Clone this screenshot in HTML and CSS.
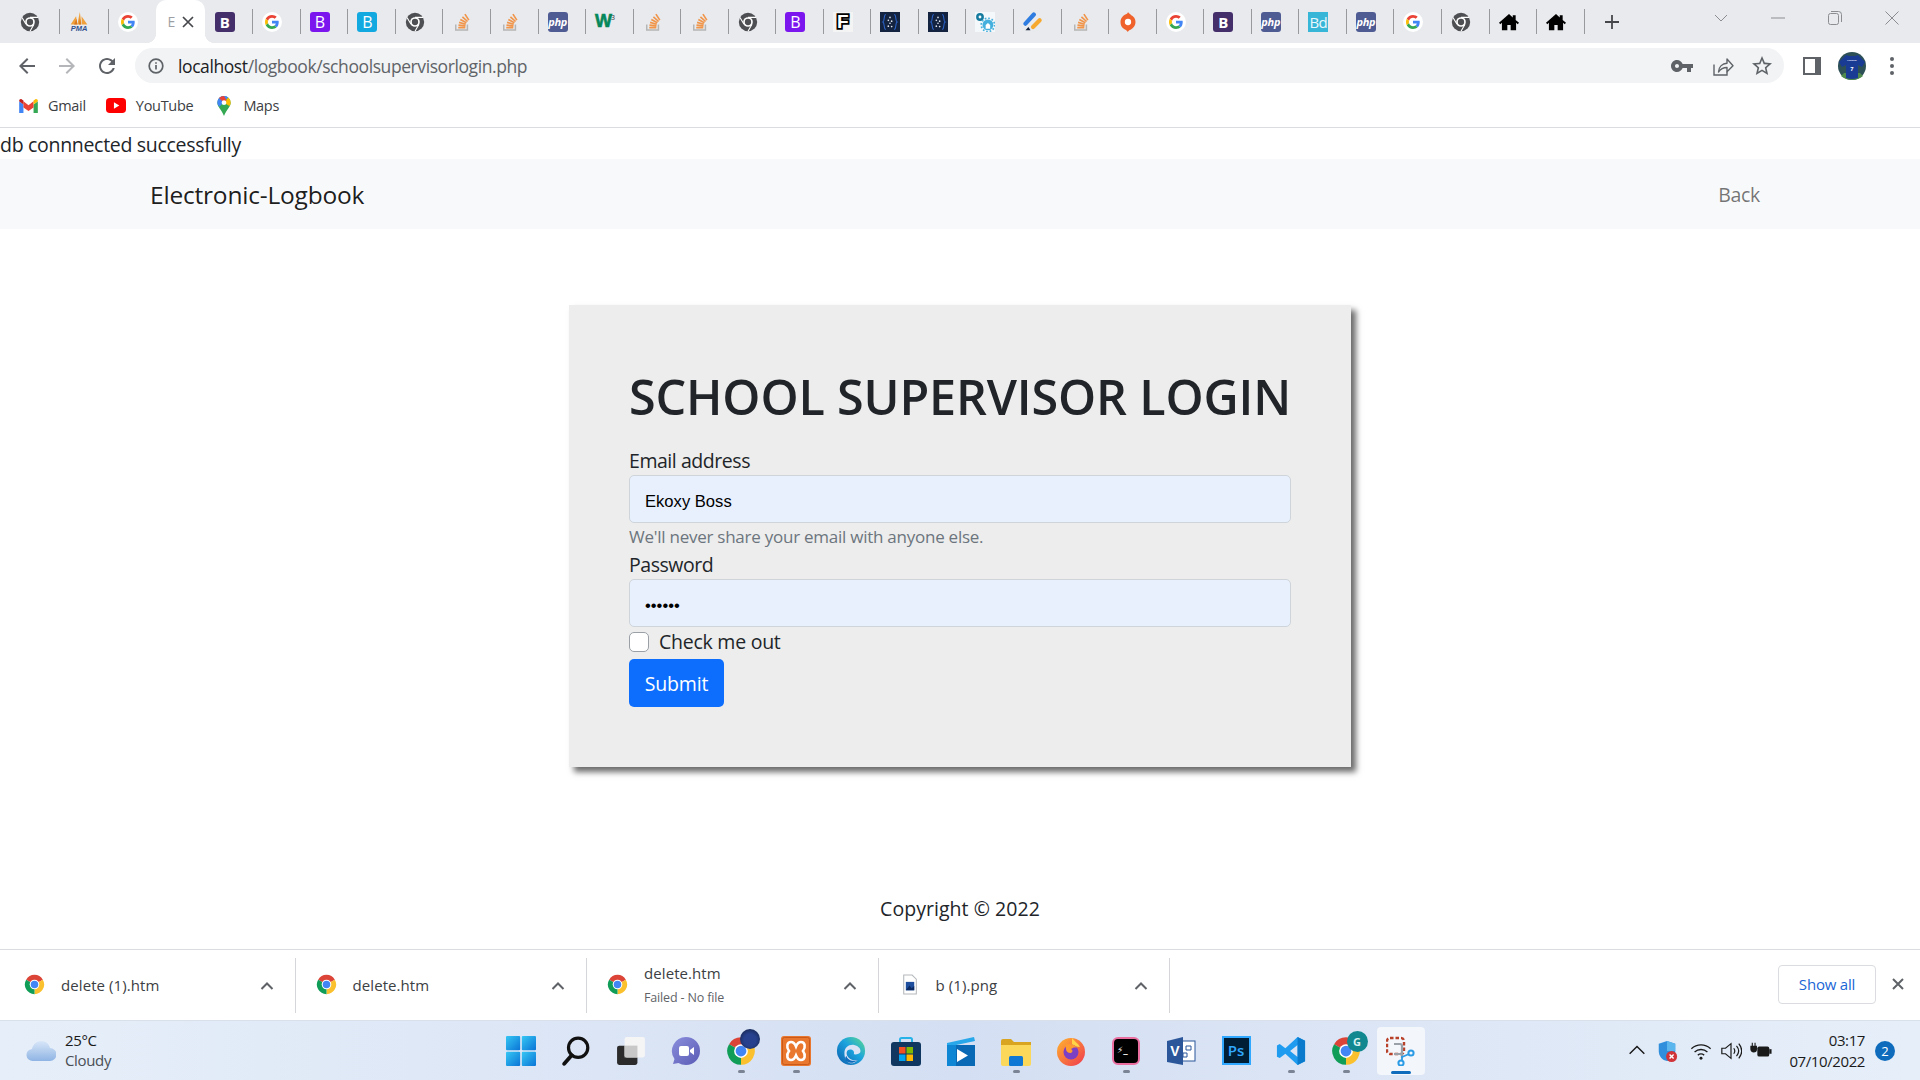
FILE: index.html
```html
<!DOCTYPE html>
<html lang="en">
<head>
<meta charset="utf-8">
<title>School Supervisor Login</title>
<link rel="stylesheet" href="styles.css">
</head>
<body>
<svg class="defs" width="0" height="0" aria-hidden="true">
  <defs>
    <linearGradient id="g-win" x1="0" y1="0" x2="1" y2="1"><stop offset="0" stop-color="#35c7f4"/><stop offset="1" stop-color="#0a74d6"/></linearGradient>
    <linearGradient id="g-chat" x1="0" y1="0" x2="1" y2="1"><stop offset="0" stop-color="#8b8fdc"/><stop offset="1" stop-color="#5a5bb5"/></linearGradient>
    <linearGradient id="g-edge" x1="0" y1="1" x2="1" y2="0"><stop offset="0" stop-color="#0b5cab"/><stop offset=".55" stop-color="#1ba3de"/><stop offset="1" stop-color="#5fdc8c"/></linearGradient>
    <linearGradient id="g-cloud" x1="0" y1="0" x2="0" y2="1"><stop offset="0" stop-color="#d8e6f8"/><stop offset="1" stop-color="#8fb4e4"/></linearGradient>
    <linearGradient id="g-fox" x1="0" y1="0" x2="1" y2="1"><stop offset="0" stop-color="#ffb52e"/><stop offset="1" stop-color="#f0374f"/></linearGradient>
    <symbol id="i-chrome-grey" viewBox="0 0 24 24">
      <circle cx="12" cy="12" r="11" fill="#4e4f52"/>
      <circle cx="12" cy="12" r="5.8" fill="#fff"/>
      <circle cx="12" cy="12" r="3.8" fill="#4e4f52"/>
      <path d="M12 6.400h9.600M7.200 14.800 2.400 6.500M16.800 14.800 12 23" stroke="#fff" stroke-width="1.300" fill="none"/>
    </symbol>
    <symbol id="i-chrome" viewBox="0 0 24 24">
      <path d="M12 12 2.470 6.500A11 11 0 0 1 21.530 6.500Z" fill="#db4437"/>
      <path d="M12 12 21.530 6.500A11 11 0 0 1 12 23Z" fill="#fbc02d"/>
      <path d="M12 12 12 23A11 11 0 0 1 2.470 6.500Z" fill="#0f9d58"/>
      <circle cx="12" cy="12" r="5.500" fill="#fff"/>
      <circle cx="12" cy="12" r="4.300" fill="#4285f4"/>
    </symbol>
    <symbol id="i-google" viewBox="0 0 60 60">
      <circle cx="30" cy="30" r="30" fill="#fff"/>
      <g transform="translate(9 9) scale(.875)">
        <path fill="#EA4335" d="M24 9.500c3.540 0 6.710 1.220 9.210 3.600l6.850-6.850C35.900 2.380 30.470 0 24 0 14.620 0 6.510 5.380 2.560 13.220l7.980 6.190C12.430 13.720 17.740 9.500 24 9.500z"/>
        <path fill="#4285F4" d="M46.980 24.550c0-1.570-.15-3.090-.38-4.550H24v9.020h12.940c-.58 2.960-2.260 5.480-4.780 7.180l7.730 6c4.510-4.180 7.090-10.360 7.090-17.650z"/>
        <path fill="#FBBC05" d="M10.530 28.590c-.48-1.450-.76-2.990-.76-4.590s.27-3.140.76-4.590l-7.980-6.190C.92 16.460 0 20.120 0 24c0 3.880.92 7.540 2.560 10.780l7.970-6.190z"/>
        <path fill="#34A853" d="M24 48c6.480 0 11.930-2.130 15.890-5.810l-7.730-6c-2.150 1.450-4.920 2.300-8.160 2.300-6.260 0-11.570-4.220-13.470-9.910l-7.980 6.190C6.510 42.620 14.620 48 24 48z"/>
      </g>
    </symbol>
    <symbol id="i-pma" viewBox="0 0 24 24">
      <path d="M2 15 8.500 5l1.500 10zM10 15l3-15 2 15zM15.500 15 15 5l7 10z" fill="#f0a13c"/>
      <path d="M6 15 9 8l1 7zM12 15l1-8 1.500 8z" fill="#d9781f"/>
      <text x="12" y="23" class="pma-text">PMA</text>
    </symbol>
    <symbol id="i-so" viewBox="0 0 24 24">
      <path d="M4.500 15v6.500h14V15" fill="none" stroke="#b5b5b5" stroke-width="1.800"/>
      <path d="M7.500 18.800h8.500M7.800 15.800l8.400.8M8.500 12.500l8 2.200M10 9l7.300 4M12.500 5.800l6.200 5.600M15.500 2.500l4.700 7.300" fill="none" stroke="#f0954a" stroke-width="2"/>
    </symbol>
    <symbol id="i-dark" viewBox="0 0 24 24">
      <rect width="24" height="24" fill="#14233f"/>
      <path d="M7 3C4 3 6 11 3.500 12 6 13 4 21 7 21M17 3c3 0 1 8 3.500 9-2.500 1-.5 9-3.500 9" fill="none" stroke="#2b63c9" stroke-width="1.300"/>
      <circle cx="12" cy="6.500" r="1" fill="#dfe6f0"/><circle cx="10" cy="10" r="1" fill="#dfe6f0"/><circle cx="14" cy="11" r="1" fill="#dfe6f0"/><circle cx="12" cy="13.500" r="1" fill="#dfe6f0"/><circle cx="10" cy="17" r="1" fill="#dfe6f0"/><circle cx="14" cy="17.500" r="1" fill="#dfe6f0"/>
    </symbol>
    <symbol id="i-gear" viewBox="0 0 24 24">
      <rect width="24" height="24" fill="#f4f8fa"/>
      <circle cx="6" cy="6" r="3.200" fill="none" stroke="#147a9e" stroke-width="3"/>
      <circle cx="15.500" cy="15.500" r="6.500" fill="#45b0dd"/>
      <circle cx="15.500" cy="15.500" r="8" fill="none" stroke="#45b0dd" stroke-width="2" stroke-dasharray="2 2.200"/>
      <path d="M12.800 20v-4.500l2.700-2.200 2.700 2.200V20z" fill="#fff"/>
    </symbol>
    <symbol id="i-tasks" viewBox="0 0 24 24">
      <path d="M3 14 13 3" stroke="#2f7de1" stroke-width="5" stroke-linecap="round" fill="none"/>
      <path d="M12 18l8-8" stroke="#f6a92e" stroke-width="5" stroke-linecap="round" fill="none"/>
      <path d="M3 22l3.500-4L9 22z" fill="#14233f"/>
    </symbol>
    <symbol id="i-origin" viewBox="0 0 24 24">
      <path d="M12 0c1 2 3 2.500 3.500 3.500C19 5 21 8 21 12c0 5-4 9-7 9.500-1 .5-2 2-2.500 2.500 0-1-1-2-2-2.500C5 20 3 16 3 12c0-5 4-8.500 7-9.500C11 2 12 1 12 0z" fill="#f0622c"/>
      <circle cx="12" cy="12" r="3.800" fill="#fff"/>
    </symbol>
    <symbol id="i-home" viewBox="0 0 24 24">
      <path d="M12 2.500 0 13l1.500 1.700L3.500 13v9h6.500v-6.500h4V22h6.500v-9l2 1.700L24 13l-4-3.500V4h-3.500v2.500z" fill="#000"/>
    </symbol>
    <symbol id="i-chev" viewBox="0 0 14 10"><path d="M1.500 8 7 2.500 12.500 8" fill="none" stroke="#5f6368" stroke-width="2"/></symbol>
  </defs>
</svg>

<div class="window">
  <header class="tabstrip">
    <div class="tab tab-wide tab-plain"><svg class="fav"><use href="#i-chrome-grey"/></svg></div>
    <div class="tab tab-wide"><svg class="fav"><use href="#i-pma"/></svg></div>
    <div class="tab"><svg class="fav"><use href="#i-google"/></svg></div>
    <div class="tab-active"><span class="tab-title">E</span><svg class="tab-x" viewBox="0 0 12 12"><path d="M1 1l10 10M11 1 1 11" stroke="#45474a" stroke-width="1.700"/></svg></div>
    <div class="tab tab-plain"><span class="fav fav-letter bs-dark">B</span></div>
    <div class="tab"><svg class="fav"><use href="#i-google"/></svg></div>
    <div class="tab"><span class="fav fav-letter bs-purple thin">B</span></div>
    <div class="tab"><span class="fav fav-letter bs-cyan thin">B</span></div>
    <div class="tab"><svg class="fav"><use href="#i-chrome-grey"/></svg></div>
    <div class="tab"><svg class="fav"><use href="#i-so"/></svg></div>
    <div class="tab"><svg class="fav"><use href="#i-so"/></svg></div>
    <div class="tab"><span class="fav fav-php">php</span></div>
    <div class="tab"><span class="fav fav-w3">W<sup>3</sup></span></div>
    <div class="tab"><svg class="fav"><use href="#i-so"/></svg></div>
    <div class="tab"><svg class="fav"><use href="#i-so"/></svg></div>
    <div class="tab"><svg class="fav"><use href="#i-chrome-grey"/></svg></div>
    <div class="tab"><span class="fav fav-letter bs-purple thin">B</span></div>
    <div class="tab"><span class="fav fav-f">F</span></div>
    <div class="tab"><svg class="fav"><use href="#i-dark"/></svg></div>
    <div class="tab"><svg class="fav"><use href="#i-dark"/></svg></div>
    <div class="tab"><svg class="fav"><use href="#i-gear"/></svg></div>
    <div class="tab"><svg class="fav"><use href="#i-tasks"/></svg></div>
    <div class="tab"><svg class="fav"><use href="#i-so"/></svg></div>
    <div class="tab"><svg class="fav"><use href="#i-origin"/></svg></div>
    <div class="tab"><svg class="fav"><use href="#i-google"/></svg></div>
    <div class="tab"><span class="fav fav-letter bs-dark">B</span></div>
    <div class="tab"><span class="fav fav-php">php</span></div>
    <div class="tab"><span class="fav fav-letter bd-cyan thin">Bd</span></div>
    <div class="tab"><span class="fav fav-php">php</span></div>
    <div class="tab"><svg class="fav"><use href="#i-google"/></svg></div>
    <div class="tab"><svg class="fav"><use href="#i-chrome-grey"/></svg></div>
    <div class="tab"><svg class="fav"><use href="#i-home"/></svg></div>
    <div class="tab"><svg class="fav"><use href="#i-home"/></svg></div>
    <div class="tab tab-new"><svg viewBox="0 0 16 16" class="plus"><path d="M8 1v14M1 8h14" stroke="#45474a" stroke-width="1.800"/></svg></div>
    <div class="winctl">
      <div class="winbtn"><svg viewBox="0 0 14 8" class="wc-chev"><path d="M1 1l6 6 6-6" fill="none" stroke="#8b8d91" stroke-width="1"/></svg></div>
      <div class="winbtn"><svg viewBox="0 0 14 14" class="wc"><path d="M0 7h14" stroke="#8b8d91" stroke-width="1"/></svg></div>
      <div class="winbtn"><svg viewBox="0 0 14 14" class="wc"><rect x=".5" y="2.500" width="10" height="11" rx="2" fill="none" stroke="#8b8d91"/><path d="M3 .5h7.500a3 3 0 0 1 3 3V11" fill="none" stroke="#8b8d91"/></svg></div>
      <div class="winbtn"><svg viewBox="0 0 14 14" class="wc"><path d="M.5.5l13 13M13.500.5l-13 13" stroke="#8b8d91" stroke-width="1"/></svg></div>
    </div>
  </header>

  <nav class="toolbar">
    <button class="tool"><svg viewBox="0 0 24 24"><path fill="#5f6368" d="M20 11H7.830l5.590-5.590L12 4l-8 8 8 8 1.410-1.410L7.830 13H20v-2z"/></svg></button>
    <button class="tool"><svg viewBox="0 0 24 24"><path fill="#b4b6b9" d="M4 11h12.170l-5.590-5.590L12 4l8 8-8 8-1.410-1.410L16.170 13H4v-2z"/></svg></button>
    <button class="tool"><svg viewBox="0 0 24 24"><path fill="#5f6368" d="M17.650 6.350C16.200 4.900 14.210 4 12 4c-4.420 0-7.990 3.580-7.990 8s3.570 8 7.990 8c3.730 0 6.840-2.550 7.730-6h-2.080c-.82 2.330-3.040 4-5.650 4-3.310 0-6-2.690-6-6s2.690-6 6-6c1.660 0 3.140.69 4.220 1.780L13 11h7V4l-2.350 2.350z"/></svg></button>
    <div class="omnibox">
      <svg class="info" viewBox="0 0 16 16"><circle cx="8" cy="8" r="6.800" fill="none" stroke="#5f6368" stroke-width="1.700"/><path d="M8 7v4.500M8 4.200v1.600" stroke="#5f6368" stroke-width="1.700"/></svg>
      <span class="url"><span class="url-host">localhost</span>/logbook/schoolsupervisorlogin.php</span>
      <div class="omni-actions">
        <button class="tool"><svg viewBox="0 0 24 24"><path fill="#5f6368" d="M12.650 10C11.830 7.670 9.610 6 7 6c-3.310 0-6 2.690-6 6s2.690 6 6 6c2.610 0 4.830-1.670 5.650-4H17v4h4v-4h2v-4H12.650zM7 14c-1.100 0-2-.9-2-2s.9-2 2-2 2 .9 2 2-.9 2-2 2z"/></svg></button>
        <button class="tool"><svg viewBox="0 0 24 24"><path d="M4 10.500V21h13v-3.500" fill="none" stroke="#5f6368" stroke-width="1.400"/><path d="M8.500 18c.3-5.500 4-8.500 8.500-8.700V5l6 6.700-6 6v-4.200c-3.500 0-6.500 1.500-8.500 4.500z" fill="none" stroke="#5f6368" stroke-width="1.400" stroke-linejoin="round"/></svg></button>
        <button class="tool"><svg viewBox="0 0 24 24"><path fill="#5f6368" d="M22 9.240l-7.190-.62L12 2 9.190 8.630 2 9.240l5.460 4.730L5.820 21 12 17.270 18.180 21l-1.630-7.030L22 9.240zM12 15.400l-3.760 2.270 1-4.280-3.320-2.880 4.380-.38L12 6.100l1.710 4.040 4.380.38-3.320 2.880 1 4.280L12 15.400z"/></svg></button>
      </div>
    </div>
    <button class="tool"><svg viewBox="0 0 24 24"><rect x="3" y="3" width="18" height="18" fill="#5f6368"/><rect x="5" y="5" width="10" height="14" fill="#fff"/></svg></button>
    <button class="tool"><svg class="avatar" viewBox="0 0 28 28"><circle cx="14" cy="14" r="14" fill="#2c5056"/><path d="M3 24c3 2.500 7 4 11 4s8-1.500 11-4l-3-3H6z" fill="#4f8a4c"/><path d="M8 3c2 1 4 1 6 1s4 0 6-1l7 7-3 5-4-2v13c-4 1.300-8 1.300-12 0V13l-4 2-3-5z" fill="#1a3b94"/><text x="14" y="9" class="avatar-name">PRINCE</text><text x="14" y="19" class="avatar-num">7</text></svg></button>
    <button class="tool"><svg viewBox="0 0 24 24"><circle cx="12" cy="5" r="2" fill="#5f6368"/><circle cx="12" cy="12" r="2" fill="#5f6368"/><circle cx="12" cy="19" r="2" fill="#5f6368"/></svg></button>
  </nav>

  <div class="bookmarks">
    <a class="bm bm-gmail"><svg class="bm-ic" viewBox="0 0 24 18"><path fill="#4285f4" d="M0 18h5.500V7L0 3z"/><path fill="#34a853" d="M18.500 18H24V3l-5.500 4z"/><path fill="#ea4335" d="M5.500 11V3L12 8l6.500-5v8L12 15.500z"/><path fill="#fbbc04" d="M18.500 7V2l2-1.400C22-.6 24 .5 24 2.500V3z"/><path fill="#c5221f" d="M0 3v-.5C0 .5 2-.6 3.500.6L5.500 2v5z"/></svg>Gmail</a>
    <a class="bm bm-yt"><svg class="bm-ic" viewBox="0 0 24 18"><rect width="24" height="18" rx="4.500" fill="#f00"/><path d="M9.500 5.200v7.600L16 9z" fill="#fff"/></svg>YouTube</a>
    <a class="bm bm-maps"><svg class="bm-pin" viewBox="0 0 16 24"><path d="M8 0a8 8 0 0 1 8 8c0 5-5 8-8 16C5 16 0 13 0 8a8 8 0 0 1 8-8z" fill="#34a853"/><path d="M2 2.500A8 8 0 0 1 13 1.700L2.500 13C1 11 0 10 0 8c0-2 .7-4 2-5.500z" fill="#4285f4"/><path d="M13 1.700A8 8 0 0 1 16 8c0 1.500-.6 2.800-1.500 4L8 8z" fill="#fbbc04"/><path d="M2 2.500 8 8l3-3-3-5C5.800 0 3.500 1 2 2.500z" fill="#ea4335"/><circle cx="8" cy="8" r="2.800" fill="#fff"/></svg>Maps</a>
  </div>

  <div class="page">
    <div class="db-msg">db connnected successfully</div>
    <div class="navbar">
      <a class="brand">Electronic-Logbook</a>
      <a class="nav-back">Back</a>
    </div>
    <main class="card">
      <h1 class="card-title">SCHOOL SUPERVISOR LOGIN</h1>
      <form>
        <label class="form-label" for="email">Email address</label>
        <input class="form-control" id="email" type="text" value="Ekoxy Boss">
        <div class="form-text">We'll never share your email with anyone else.</div>
        <label class="form-label" for="pw">Password</label>
        <input class="form-control" id="pw" type="password" value="secret">
        <div class="check-row"><span class="check-box"></span><span class="check-label">Check me out</span></div>
        <button class="btn-submit" type="button">Submit</button>
      </form>
    </main>
    <footer class="copyright">Copyright © 2022</footer>
  </div>

  <div class="downloads">
    <div class="dl"><svg class="dl-ic"><use href="#i-chrome"/></svg><div class="dl-name">delete (1).htm</div><svg class="dl-chev"><use href="#i-chev"/></svg></div>
    <div class="dl"><svg class="dl-ic"><use href="#i-chrome"/></svg><div class="dl-name">delete.htm</div><svg class="dl-chev"><use href="#i-chev"/></svg></div>
    <div class="dl"><svg class="dl-ic"><use href="#i-chrome"/></svg><div class="dl-name dl-two">delete.htm<small class="dl-sub">Failed - No file</small></div><svg class="dl-chev"><use href="#i-chev"/></svg></div>
    <div class="dl"><svg class="dl-ic" viewBox="0 0 20 20"><path d="M4.500 1h8l4 4v14h-12z" fill="#fff" stroke="#b5b8bc"/><rect x="6.500" y="7.500" width="8" height="8" fill="#1d4e9e"/><path d="M6.500 15.500 10 11l2 2.500 2.500-2v4z" fill="#0b2a63"/></svg><div class="dl-name">b (1).png</div><svg class="dl-chev"><use href="#i-chev"/></svg></div>
    <button class="show-all">Show all</button>
    <svg class="dl-close" viewBox="0 0 12 12"><path d="M1 1l10 10M11 1 1 11" stroke="#5f6368" stroke-width="2"/></svg>
  </div>

  <div class="taskbar">
    <div class="weather">
      <svg class="cloud" viewBox="0 0 30 22"><path d="M7 21a6 6 0 0 1-1-12C7 4 11 1 15.500 1 20 1 23 4 24 8a6.500 6.500 0 0 1 0 13z" fill="url(#g-cloud)"/></svg>
      <div class="weather-text"><div>25°C</div><div class="weather-sub">Cloudy</div></div>
    </div>
    <div class="apps">
      <div class="app"><svg class="app-ic" viewBox="0 0 29 29"><rect width="13.700" height="13.700" rx="1" fill="url(#g-win)"/><rect x="15.300" width="13.700" height="13.700" rx="1" fill="url(#g-win)"/><rect y="15.300" width="13.700" height="13.700" rx="1" fill="url(#g-win)"/><rect x="15.300" y="15.300" width="13.700" height="13.700" rx="1" fill="url(#g-win)"/></svg></div>
      <div class="app"><svg class="app-ic" viewBox="0 0 28 28"><circle cx="16" cy="11" r="9" fill="none" stroke="#111" stroke-width="3"/><path d="M10 18 3 26" stroke="#111" stroke-width="3.500" stroke-linecap="round"/></svg></div>
      <div class="app"><svg class="app-ic" viewBox="0 0 28 28"><rect x="1" y="9" width="19" height="18" rx="2" fill="#2b2b2b"/><rect x="8" y="1" width="19" height="19" rx="2" fill="#f5f5f5"/><rect x="8" y="9" width="12" height="11" fill="#c8c8c8"/></svg></div>
      <div class="app"><svg class="app-ic" viewBox="0 0 30 30"><path d="M15 1a14 14 0 0 1 0 28c-3 0-5.500-.8-7.500-2L2 28l1.500-5A14 14 0 0 1 15 1z" fill="url(#g-chat)"/><rect x="8" y="10" width="10" height="10" rx="2" fill="#fff"/><path d="M19 14l4-3v8l-4-3z" fill="#fff"/></svg></div>
      <div class="app app-on"><svg class="app-ic" viewBox="0 0 24 24"><use href="#i-chrome"/></svg><span class="badge-pic"></span></div>
      <div class="app app-on"><svg class="app-ic" viewBox="0 0 30 30"><rect width="30" height="30" rx="3" fill="#e9772e"/><rect x="1.500" y="1.500" width="27" height="27" rx="2" fill="none" stroke="#c95a1a"/><path d="M10 6c-4 0-5 5-2 9-3 4-2 9 2 9 2.500 0 4-2 5-4.500C16 22 17.500 24 20 24c4 0 5-5 2-9 3-4 2-9-2-9-2.500 0-4 2-5 4.500C14 8 12.500 6 10 6z" fill="none" stroke="#fff" stroke-width="2.600"/></svg></div>
      <div class="app"><svg class="app-ic" viewBox="0 0 32 32"><circle cx="16" cy="16" r="15" fill="url(#g-edge)"/><path d="M9 18c0-6 5-9.500 10.500-8.500C24 10.500 27 14 26 17c-.7 2-4 3-7 2.500 1-3-1-5-4-5s-4.500 3-3 6.500c1.500 3.500 6 5.500 11 4.500-2 2.500-5 4-8 3.500C10 27 9 22 9 18z" fill="#d9e3f5"/><path d="M11 21c1 4 6 7 12 4.500-3 3-8 4-11 2-2.500-1.500-3-4-1-6.500z" fill="#0f6cbd"/></svg></div>
      <div class="app"><svg class="app-ic" viewBox="0 0 30 30"><path d="M9 7V3.500A1.500 1.500 0 0 1 10.500 2h9A1.500 1.500 0 0 1 21 3.500V7" fill="none" stroke="#27b3e8" stroke-width="2"/><rect y="6" width="30" height="24" rx="3" fill="#10375f"/><rect x="8" y="11" width="6.500" height="6.500" fill="#f25022"/><rect x="15.500" y="11" width="6.500" height="6.500" fill="#7fba00"/><rect x="8" y="18.500" width="6.500" height="6.500" fill="#00a4ef"/><rect x="15.500" y="18.500" width="6.500" height="6.500" fill="#ffb900"/></svg></div>
      <div class="app"><svg class="app-ic" viewBox="0 0 30 30"><path d="M1 7 28 1l1 4-28 6z" fill="#28a8ea"/><path d="M1 9h28v21H1z" fill="#0a69b5"/><path d="M1 9h9v21H1z" fill="#0e86d4"/><path d="M11 13l11 6.500L11 26z" fill="#fff"/></svg></div>
      <div class="app app-on"><svg class="app-ic" viewBox="0 0 30 30"><path d="M0 5a2 2 0 0 1 2-2h8l3 3h17v6H0z" fill="#d9a520"/><path d="M0 9h30v19a2 2 0 0 1-2 2H2a2 2 0 0 1-2-2z" fill="#fbd75a"/><rect x="8" y="20" width="14" height="10" rx="1.500" fill="#0f78d4"/></svg></div>
      <div class="app"><svg class="app-ic" viewBox="0 0 30 30"><circle cx="15" cy="16" r="14" fill="url(#g-fox)"/><path d="M16 2c2 3 6 5 8 9L16 10z" fill="#ffd447"/><circle cx="15" cy="16" r="7.500" fill="#7d3fc4"/><path d="M9 9c4-2 10-1 12 3-3-1-4 0-6 1 2 1 2 3 0 4-2 .5-5-1-5-4 0-1-.5-3-1-4z" fill="#ff9a2e"/></svg></div>
      <div class="app app-on"><span class="app-term">⚡_</span></div>
      <div class="app"><svg class="app-ic" viewBox="0 0 30 30"><rect x="13" y="5" width="16" height="20" fill="#fff" stroke="#2b579a"/><path d="M20 10h5v4h-5zM17 17h4v4h-4z" fill="none" stroke="#2b579a"/><path d="M1 5l16-4v28L1 26z" fill="#2b579a"/><text x="9" y="20" class="visio-text">V</text></svg></div>
      <div class="app"><span class="app-ps">Ps</span></div>
      <div class="app app-on"><svg class="app-ic" viewBox="0 0 32 32"><path fill-rule="evenodd" d="M23 1l8 4v22l-8 4L10 19l-6 4.500-3-1.500V10l3-1.500L10 13zM23 9.500 15 16l8 6.500z" fill="#1f9cf0"/><path d="M23 1l8 4v22l-8 4z" fill="#0a7acc"/></svg></div>
      <div class="app app-on"><svg class="app-ic" viewBox="0 0 24 24"><use href="#i-chrome"/></svg><span class="badge-g">G</span></div>
      <div class="app app-active"><svg class="app-ic" viewBox="0 0 30 30"><rect x="1" y="2" width="17" height="16" rx="3" fill="none" stroke="#b8412a" stroke-width="2.400" stroke-dasharray="3.500 2"/><path d="M8 8h6a2 2 0 0 1 2 2v12" fill="none" stroke="#9aa0a8" stroke-width="2.200"/><path d="M16 18H8" stroke="#9aa0a8" stroke-width="2"/><circle cx="25" cy="17" r="2.600" fill="none" stroke="#2b9be6" stroke-width="2"/><circle cx="15" cy="27" r="2.600" fill="none" stroke="#2b9be6" stroke-width="2"/><path d="M16 21l7-3M16 20v4" stroke="#2b9be6" stroke-width="1.800"/></svg></div>
    </div>
    <div class="tray">
      <svg class="tray-ic" viewBox="0 0 24 24"><path d="M4 15l8-8 8 8" fill="none" stroke="#1a1a1a" stroke-width="1.600"/></svg>
      <span class="tray-shield"><svg class="tray-ic" viewBox="0 0 24 24"><path d="M12 1l9 3v8c0 6-4 10-9 11-5-1-9-5-9-11V4z" fill="#2f8fdc"/><path d="M12 1l9 3v8H12z" fill="#5bb6ee"/><circle cx="17" cy="18" r="6" fill="#d13438"/><path d="M14.800 15.800l4.400 4.400m0-4.400-4.400 4.400" stroke="#fff" stroke-width="1.500"/></svg></span>
      <svg class="tray-ic" viewBox="0 0 24 24"><path d="M1.500 9.500c6-5.500 15-5.500 21 0M5 13c4-3.500 10-3.500 14 0M8.500 16.500c2-1.500 5-1.500 7 0" fill="none" stroke="#1a1a1a" stroke-width="1.400"/><circle cx="12" cy="20" r="1.600" fill="#1a1a1a"/></svg>
      <svg class="tray-ic" viewBox="0 0 24 24"><path d="M2 9v6h4l6 5V4L6 9z" fill="none" stroke="#1a1a1a" stroke-width="1.300"/><path d="M15 9c1.500 2 1.500 4 0 6M18 6.500c3 3.500 3 7.500 0 11M20.500 4c4 5 4 11 0 16" fill="none" stroke="#1a1a1a" stroke-width="1.300"/></svg>
      <svg class="tray-ic" viewBox="0 0 24 24"><rect x="8" y="7" width="13" height="11" rx="2" fill="#1a1a1a"/><rect x="21" y="10" width="2.500" height="5" fill="#1a1a1a"/><path d="M1 7h6v3a3 3 0 0 1-6 0zM2.500 3v4M5.500 3v4" fill="#1a1a1a" stroke="#1a1a1a" stroke-width="1.200"/></svg>
      <div class="clock"><div>03:17</div><div>07/10/2022</div></div>
      <span class="notif">2</span>
    </div>
  </div>
</div>
</body>
</html>
```
FILE: styles.css
```css
* { box-sizing: border-box; }
html, body { margin: 0; padding: 0; height: 100%; }
body { font-family: "Open Sans", "Noto Sans", sans-serif; color: #212529; background: #fff; overflow: hidden; }
.defs { position: absolute; }
button { border: 0; background: none; padding: 0; font: inherit; }
.window { display: flex; flex-direction: column; width: 1920px; height: 1080px; }

/* tabs */
.tabstrip { display: flex; height: 43px; flex: none; padding-left: 10px; background: #e8eaed; }
.tab { flex: none; width: 47.55px; height: 25px; margin-top: 9px; padding-left: 9px; border-left: 1px solid #97999d; display: flex; align-items: center; }
.tab-plain { border-left-color: transparent; }
.tab-wide { width: 49px; }
.fav { width: 20px; height: 20px; flex: none; display: block; }
.fav-letter { display: flex; align-items: center; justify-content: center; border-radius: 3px; color: #fff; font: 700 15px "Open Sans", sans-serif; }
.thin { font-weight: 400; font-size: 16px; }
.bs-dark { background: #452f6b; }
.bs-purple { background: #7c16ef; }
.bs-cyan { background: #12a8e0; }
.bd-cyan { background: #38b6d8; color: #e9f8fc; border-radius: 0; letter-spacing: -.5px; font-size: 15px; }
.fav-php { display: flex; align-items: center; justify-content: center; border-radius: 3px; background: #4f5b93; color: #fff; font: italic 700 11px "Open Sans", sans-serif; letter-spacing: -.3px; }
.fav-w3 { display: flex; align-items: center; justify-content: center; color: #04875a; font: 700 18px "Liberation Sans", sans-serif; letter-spacing: -1px; -webkit-text-stroke: .6px #04875a; }
.fav-w3 sup { font: 400 7px "Open Sans", sans-serif; color: #333; margin-top: -8px; -webkit-text-stroke: 0; letter-spacing: 0; }
.fav-f { display: flex; align-items: center; justify-content: center; background: #f4f4f4; color: #fff; font: 900 19px/1 "Liberation Sans", sans-serif; -webkit-text-stroke: 3.500px #000; paint-order: stroke fill; }
.pma-text { font: italic 700 9px "Liberation Sans", sans-serif; fill: #33508f; text-anchor: middle; }
.tab-active { position: relative; flex: none; width: 49.200px; height: 43px; display: flex; align-items: center; padding: 0 0 0 12px; background: #fff; border-radius: 10px 10px 0 0; }
.tab-active::before, .tab-active::after { content: ""; position: absolute; bottom: 0; width: 10px; height: 10px; }
.tab-active::before { left: -10px; background: radial-gradient(circle at 0 0, #e8eaed 10px, #fff 10.500px); }
.tab-active::after { right: -10px; background: radial-gradient(circle at 100% 0, #e8eaed 10px, #fff 10.500px); z-index: 1; }
.tab-title { font-size: 14px; color: #9ca0a5; width: 8px; overflow: hidden; }
.tab-x { width: 12px; height: 12px; margin-left: 6px; }
.tab-new { width: auto; padding-left: 19px; }
.plus { width: 16px; height: 16px; }
.winctl { display: flex; margin-left: auto; height: 36px; }
.winbtn { width: 57px; display: flex; align-items: center; justify-content: center; }
.wc { width: 14px; height: 14px; }
.wc-chev { width: 14px; height: 8px; }

/* toolbar */
.toolbar { display: flex; align-items: center; height: 40px; flex: none; padding: 5px 8px 0 7px; background: #fff; }
.tool { width: 40px; height: 35px; flex: none; display: flex; align-items: center; justify-content: center; }
.tool svg { width: 24px; height: 24px; }
.tool svg.avatar { width: 28px; height: 28px; }
.avatar-name { font: 700 2.500px "Liberation Sans", sans-serif; fill: #e6ecff; text-anchor: middle; }
.avatar-num { font: 700 6px "Liberation Sans", sans-serif; fill: #fff; text-anchor: middle; }
.omnibox { flex: 1; height: 35px; margin: 0 8px; display: flex; align-items: center; padding: 0 2px 0 13px; background: #f1f3f4; border-radius: 18px; }
.info { width: 16px; height: 16px; flex: none; }
.url { margin-left: 14px; font: 17.500px "Open Sans", sans-serif; letter-spacing: -.41px; color: #5f6368; }
.url-host { color: #202124; }
.omni-actions { display: flex; margin-left: auto; }

/* bookmarks */
.bookmarks { display: flex; align-items: center; height: 45px; flex: none; padding: 1px 0 0 19px; background: #fff; border-bottom: 1px solid #dadce0; font-size: 14.500px; letter-spacing: -.3px; color: #3c4043; }
.bm { display: flex; align-items: center; gap: 10px; }
.bm-ic { width: 19px; height: 14px; flex: none; }
.bm-yt { margin-left: 20px; }
.bm-yt .bm-ic { width: 20px; height: 15px; }
.bm-maps { margin-left: 24px; gap: 12px; }
.bm-pin { width: 14px; height: 20px; flex: none; }

/* page */
.page { flex: 1; min-height: 0; display: flex; flex-direction: column; background: #fff; font-size: 19.500px; letter-spacing: -.3px; }
.db-msg { height: 31px; line-height: 33px; }
.navbar { display: flex; align-items: center; justify-content: space-between; height: 70px; flex: none; padding: 0 160px 0 150px; background: #f8f9fa; }
.brand { font-size: 24.500px; letter-spacing: -.2px; color: rgba(0,0,0,.9); }
.nav-back { color: rgba(0,0,0,.55); }
.card { width: 782px; height: 462px; flex: none; margin: 76px auto 0; padding: 61px 60px 60px; background: #ededed; box-shadow: 5px 5px 6px #6b6b6b; }
.card-title { margin: 0 0 21px; font-size: 48.500px; line-height: 60px; font-weight: 600; letter-spacing: -.16px; color: #212529; white-space: nowrap; }
.form-label { display: block; height: 28px; line-height: 28px; letter-spacing: -.45px; }
.form-control { display: block; width: 100%; height: 48px; padding: 5px 15px 0; border: 1px solid #ced4da; border-radius: 5px; background: #e8f0fe; font: 16.600px "Liberation Sans", Arial, sans-serif; letter-spacing: 0; color: #000; outline: 0; }
.form-text { height: 28px; line-height: 28px; font-size: 17px; letter-spacing: -.25px; color: #6c757d; }
.check-row { display: flex; align-items: center; height: 32px; gap: 10px; line-height: 30px; }
.check-label { margin-top: -2px; letter-spacing: -.25px; }
.check-box { width: 20px; height: 20px; margin-top: -2px; background: #fff; border: 1px solid #9aa0a6; border-radius: 5px; }
.btn-submit { display: block; width: 95px; height: 48px; border-radius: 5px; background: #0d6efd; color: #fff; font-size: 19.500px; letter-spacing: -.2px; text-align: center; }
.copyright { margin-top: 127px; line-height: 30px; text-align: center; letter-spacing: .05px; }

/* downloads */
.downloads { display: flex; align-items: center; height: 71px; flex: none; padding: 0 17px 0 4px; background: #fff; border-top: 1px solid #dadce0; }
.dl { display: flex; align-items: center; width: 291.500px; height: 55px; flex: none; padding: 0 21px 0 20px; border-right: 1px solid #d4d6d9; }
.dl-ic { width: 21px; height: 21px; flex: none; margin-top: -2px; }
.dl-name { margin-left: 16px; font-size: 15px; letter-spacing: .08px; color: #3c4043; flex: 1; }
.dl-two { margin-top: -2px; }
.dl-sub { display: block; margin-top: 6px; font-size: 12.500px; color: #5f6368; letter-spacing: -.15px; }
.dl-chev { width: 14px; height: 10px; flex: none; margin-top: 2px; }
.show-all { width: 98px; height: 39px; margin-left: auto; margin-top: -2px; border: 1px solid #dadce0; border-radius: 4px; color: #1a66d6; font-size: 15px; font-weight: 500; letter-spacing: -.2px; }
.dl-close { width: 12px; height: 12px; margin-left: 16px; margin-right: -1px; margin-top: -2px; flex: none; }

/* taskbar */
.taskbar { display: grid; grid-template-columns: 1fr auto 1fr; align-items: center; height: 60px; flex: none; background: linear-gradient(90deg, #e6eff9 0%, #d4dff3 50%, #dbe5f5 70%, #e6eff9 100%); border-top: 1px solid #d9e0ea; }
.weather { display: flex; align-items: center; gap: 9px; padding-left: 26px; }
.cloud { width: 30px; height: 22px; flex: none; }
.weather-text { margin-top: -2px; font-size: 15px; line-height: 20px; color: #1a1a1a; letter-spacing: -.35px; }
.weather-sub { color: #4a4f55; }
.apps { display: flex; padding-left: 2px; }
.app { position: relative; width: 55px; height: 48px; display: flex; align-items: center; justify-content: center; }
.app-ic { width: 30px; height: 30px; display: block; }
.app-on::after { content: ""; position: absolute; left: 24px; bottom: 2px; width: 7px; height: 3px; border-radius: 2px; background: #7b8494; }
.app-active { background: #f3f6fb; border-radius: 4px; width: 48px; margin: 0 3.500px; }
.app-active::after { content: ""; position: absolute; left: 14px; bottom: 1px; width: 20px; height: 3px; border-radius: 2px; background: #0f6cbd; }
.badge-pic { position: absolute; right: 9px; top: 2px; width: 20px; height: 20px; border-radius: 50%; background: radial-gradient(circle at 50% 55%, #27418f 40%, #1a2c5c 75%); }
.badge-g { position: absolute; right: 6px; top: 4px; width: 21px; height: 21px; border-radius: 50%; background: #11888f; color: #d9f2f2; font: 700 11px/21px "Open Sans", sans-serif; text-align: center; }
.app-term { width: 28px; height: 28px; border-radius: 6px; background: #000; border: 2px solid #ea6fa0; color: #fff; font: 700 9px/22px "DejaVu Sans", sans-serif; padding-left: 3px; overflow: hidden; }
.app-ps { width: 29px; height: 29px; background: #001e36; border: 2px solid #31a8ff; color: #31a8ff; font: 600 15px/25px "Open Sans", sans-serif; text-align: center; }
.visio-text { font: 700 14px "Liberation Sans", sans-serif; fill: #fff; text-anchor: middle; }
.tray { display: flex; align-items: center; justify-content: flex-end; padding-right: 25px; }
.tray-ic { width: 22px; height: 22px; margin: 0 4px; flex: none; display: block; }
.tray-shield { padding-right: 4px; }
.clock { margin-left: 13px; font-size: 15px; line-height: 21px; text-align: right; letter-spacing: -.4px; color: #1a1a1a; }
.notif { width: 20px; height: 20px; margin-left: 10px; border-radius: 50%; background: #0f6cbd; color: #fff; font-size: 13px; line-height: 20px; text-align: center; }
```
